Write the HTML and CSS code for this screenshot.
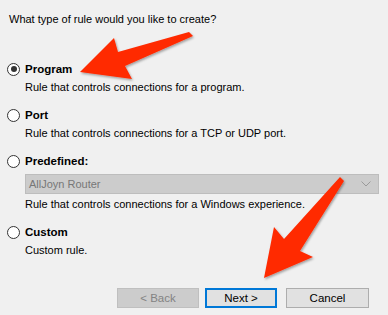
FILE: index.html
```html
<!DOCTYPE html>
<html>
<head>
<meta charset="utf-8">
<link rel="stylesheet" href="styles.css">
</head>
<body>
<div class="page">
  <div class="question">What type of rule would you like to create?</div>
  <div class="options">
    <div class="option">
      <div class="label-row"><span class="radio checked"></span><span class="label">Program</span></div>
      <div class="desc">Rule that controls connections for a program.</div>
    </div>
    <div class="option">
      <div class="label-row"><span class="radio"></span><span class="label">Port</span></div>
      <div class="desc">Rule that controls connections for a TCP or UDP port.</div>
    </div>
    <div class="option">
      <div class="label-row"><span class="radio"></span><span class="label">Predefined:</span></div>
      <div class="combo"><span>AllJoyn Router</span>
        <svg class="chev" width="10" height="6" viewBox="0 0 10 6"><polyline points="0.5,0.5 5,5 9.5,0.5" fill="none" stroke="#9a9a9a" stroke-width="1"/></svg>
      </div>
      <div class="desc">Rule that controls connections for a Windows experience.</div>
    </div>
    <div class="option">
      <div class="label-row"><span class="radio"></span><span class="label">Custom</span></div>
      <div class="desc">Custom rule.</div>
    </div>
  </div>
  <div class="buttons">
    <button class="btn disabled">&lt; Back</button>
    <button class="btn default">Next &gt;</button>
    <button class="btn cancel">Cancel</button>
  </div>
</div>
<svg class="arrows" width="388" height="315" viewBox="0 0 388 315">
  <defs>
    <filter id="sh" x="-20%" y="-20%" width="140%" height="140%">
      <feDropShadow dx="1" dy="1.5" stdDeviation="1" flood-color="#000" flood-opacity="0.35"/>
    </filter>
  </defs>
  <polygon filter="url(#sh)" fill="#ff2a00" points="80,72 114,38 118,52 189,32 193,36 125,66 132,79"/>
  <polygon filter="url(#sh)" fill="#ff2a00" points="264,278 274,227 284,239 340,177 344,181 300,251 313,257"/>
</svg>
</body>
</html>
```
FILE: styles.css
```css
html, body {
  margin: 0;
  padding: 0;
}
body {
  width: 388px;
  height: 315px;
  background: #f0f0f0;
  font-family: "Liberation Sans", Arial, sans-serif;
  font-size: 11px;
  color: #000;
  position: relative;
  overflow: hidden;
}
.page {
  padding: 12px 0 0 9px;
}
.question {
  line-height: 14px;
  height: 14px;
}
.options {
  margin-top: 36px;
  display: flex;
  flex-direction: column;
  gap: 14px;
}
.option {
  display: flex;
  flex-direction: column;
}
.label-row {
  display: flex;
  align-items: center;
  height: 14px;
  margin-left: -2px;
}
.radio {
  width: 11px;
  height: 11px;
  border: 1px solid #333;
  border-radius: 50%;
  background: #fff;
  box-sizing: content-box;
  position: relative;
  margin-right: 5px;
}
.radio.checked::after {
  content: "";
  position: absolute;
  left: 2.5px;
  top: 2.5px;
  width: 6px;
  height: 6px;
  border-radius: 50%;
  background: #333;
}
.label {
  font-weight: bold;
  font-size: 11.5px;
  line-height: 14px;
}
.desc {
  margin-left: 16px;
  margin-top: 4px;
  line-height: 14px;
}
.combo {
  margin: 6px 0 0 16px;
  width: 354px;
  height: 20px;
  box-sizing: border-box;
  border: 1px solid #bdbdbd;
  background: #cccccc;
  color: #777;
  display: flex;
  align-items: center;
  justify-content: space-between;
  padding: 0 7px 0 3px;
}
.combo + .desc {
  margin-top: 3px;
}
.buttons {
  display: flex;
  margin-top: 31px;
  margin-left: 108px;
}
.btn {
  font-family: "Liberation Sans", Arial, sans-serif;
  font-size: 11.5px;
  height: 20px;
  padding: 0;
  margin: 0;
  box-sizing: border-box;
  background: #e1e1e1;
  border: 1px solid #adadad;
  color: #000;
}
.btn.disabled {
  width: 82px;
  background: #cccccc;
  border-color: #bfbfbf;
  color: #838383;
}
.btn.default {
  width: 72px;
  margin-left: 6px;
  border: 2px solid #0078d7;
}
.btn.cancel {
  width: 83px;
  margin-left: 9px;
}
.arrows {
  position: absolute;
  left: 0;
  top: 0;
  pointer-events: none;
}
```
